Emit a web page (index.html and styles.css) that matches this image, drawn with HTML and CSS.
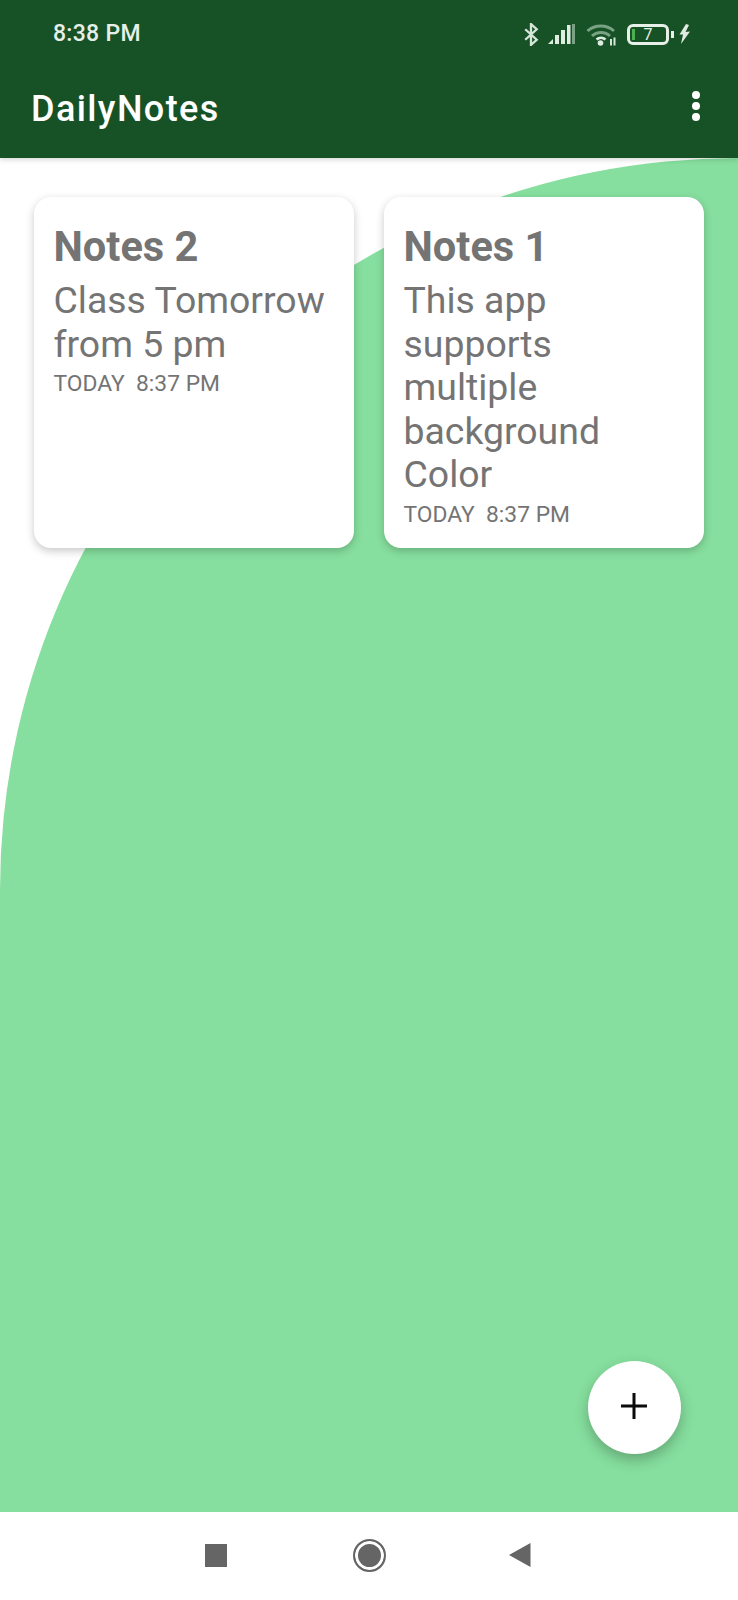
FILE: index.html
```html
<!DOCTYPE html>
<html lang="en">
<head>
    <meta charset="UTF-8">
    <meta name="viewport" content="width=device-width, initial-scale=1.0">
    <title>DailyNotes</title>
    <link rel="stylesheet" href="styles.css">
</head>
<body>
    <header class="app-header">
        <div class="status-bar">
            <span class="status-time">8:38 PM</span>
            <div class="status-icons">
                <svg class="icon-bt" width="15" height="23" viewBox="0 0 14 22">
                    <path d="M1 6 L12 16 L6.5 21 V1 L12 6 L1 16" fill="none" stroke="#d5e5d8" stroke-width="2.2"/>
                </svg>
                <svg class="icon-signal" width="27" height="20" viewBox="0 0 27 20">
                    <path d="M0 20 L5 15 V20 Z" fill="#e0ebe2"/>
                    <rect x="7" y="11" width="4" height="9" fill="#e0ebe2"/>
                    <rect x="13" y="6" width="4" height="14" fill="#e0ebe2"/>
                    <rect x="19" y="1" width="3.5" height="19" fill="#e0ebe2"/>
                    <rect x="24" y="0" width="3" height="20" fill="#79a183"/>
                </svg>
                <svg class="icon-wifi" width="31" height="23" viewBox="0 0 31 23">
                    <path d="M1.5 8 A20 20 0 0 1 28 8" fill="none" stroke="#79a183" stroke-width="3"/>
                    <path d="M6 13 A13 13 0 0 1 24 13" fill="none" stroke="#79a183" stroke-width="3"/>
                    <path d="M10.5 16.5 A7 7 0 0 1 19.5 16.5" fill="none" stroke="#e0ebe2" stroke-width="2.6"/>
                    <circle cx="14.5" cy="20" r="2.8" fill="#e0ebe2"/>
                    <rect x="24" y="16" width="2" height="6.5" fill="#d5e5d8"/>
                    <rect x="27.5" y="14.5" width="2" height="8" fill="#d5e5d8"/>
                </svg>
                <div class="battery">
                    <span class="battery-level"></span>
                    <span class="battery-num">7</span>
                </div>
                <span class="battery-nub"></span>
                <svg class="icon-bolt" width="11" height="20" viewBox="0 0 11 20">
                    <path d="M7 0 L0.5 10.5 L4 10.5 L2 20 L11 7.5 L6.5 8 L10 1 Z" fill="#e0ebe2"/>
                </svg>
            </div>
        </div>
        <div class="toolbar">
            <span class="app-title">DailyNotes</span>
            <div class="menu-dots">
                <span></span>
                <span></span>
                <span></span>
            </div>
        </div>
    </header>

    <main class="notes-area">
        <div class="note-card">
            <h2 class="note-title">Notes 2</h2>
            <p class="note-text">Class Tomorrow from 5 pm</p>
            <p class="note-date">TODAY&nbsp; 8:37 PM</p>
        </div>
        <div class="note-card">
            <h2 class="note-title">Notes 1</h2>
            <p class="note-text">This app supports multiple background Color</p>
            <p class="note-date">TODAY&nbsp; 8:37 PM</p>
        </div>
        <button class="fab">
            <svg width="28" height="28" viewBox="0 0 28 28">
                <path d="M14 1 V27 M1 14 H27" stroke="#0b0b0b" stroke-width="3"/>
            </svg>
        </button>
    </main>

    <nav class="nav-bar">
        <span class="nav-square"></span>
        <span class="nav-home"></span>
        <svg width="22" height="24" viewBox="0 0 22 24">
            <path d="M0 12 L21.5 0 V24 Z" fill="#656565"/>
        </svg>
    </nav>
</body>
</html>
```

FILE: styles.css
```css
* {
    box-sizing: border-box;
}
body {
    font-family: Roboto, sans-serif;
    background-color: white;
    margin: 0;
    width: 738px;
    height: 1600px;
    display: flex;
    flex-direction: column;
}

/* top bar */
.app-header {
    background: #175227;
    color: white;
    height: 158px;
    flex-shrink: 0;
    position: relative;
    z-index: 1;
    box-shadow: 0 2px 5px rgba(0,0,0,0.15);
}
.status-bar {
    height: 66px;
    padding: 0 48px 0 53px;
    display: flex;
    align-items: center;
    justify-content: space-between;
}
.status-time {
    font-size: 23px;
    font-weight: 500;
    letter-spacing: 0.3px;
    color: #e6efe8;
}
.status-icons {
    display: flex;
    align-items: center;
    margin-top: 2px;
}
.icon-bt {
    margin-right: 9px;
}
.icon-signal {
    margin-right: 11px;
}
.icon-wifi {
    margin-right: 10px;
}
.battery {
    width: 42px;
    height: 21px;
    border: 3px solid #e6efe8;
    border-radius: 6px;
    display: flex;
    align-items: center;
    justify-content: center;
    position: relative;
}
.battery-level {
    position: absolute;
    left: 2px;
    top: 2px;
    width: 3px;
    height: 11px;
    background: #4caf50;
}
.battery-num {
    font-size: 16px;
    color: #e6efe8;
}
.battery-nub {
    width: 3px;
    height: 7px;
    margin-left: 2px;
    margin-right: 5px;
    background: #e6efe8;
}
.toolbar {
    height: 86px;
    padding: 0 38px 0 31px;
    display: flex;
    align-items: center;
    justify-content: space-between;
}
.app-title {
    font-size: 36px;
    font-weight: 500;
    letter-spacing: 1.4px;
}
.menu-dots {
    display: flex;
    flex-direction: column;
    gap: 3px;
    padding-bottom: 6px;
}
.menu-dots span {
    width: 8px;
    height: 8px;
    border-radius: 50%;
    background: white;
}

/* notes */
.notes-area {
    flex: 1;
    position: relative;
    background: #86df9e;
    border-top-left-radius: 738px 732px;
    padding: 39px 34px;
    display: flex;
    align-items: flex-start;
    gap: 30px;
}
.note-card {
    width: 320px;
    height: 351px;
    background: white;
    border-radius: 17px;
    padding: 26px 19.5px;
    color: #747474;
    box-shadow: 0 3px 8px rgba(0,0,0,0.22);
}
.note-title {
    margin: 0;
    font-size: 41.6px;
    line-height: 48px;
    font-weight: 700;
}
.note-text {
    margin: 8px 0 0;
    font-size: 37.4px;
    line-height: 43.6px;
}
.note-date {
    margin: 3px 0 0;
    font-size: 22.8px;
    line-height: 30px;
}
.fab {
    position: absolute;
    right: 57px;
    bottom: 58px;
    width: 93px;
    height: 93px;
    border: none;
    border-radius: 50%;
    background: white;
    padding: 0 1px 3px 0;
    display: flex;
    align-items: center;
    justify-content: center;
    box-shadow: 0 6px 14px rgba(0,0,0,0.25);
}

/* system nav */
.nav-bar {
    height: 88px;
    flex-shrink: 0;
    background: white;
    padding: 0 0 2px 205px;
    display: flex;
    align-items: center;
}
.nav-square {
    width: 22px;
    height: 23px;
    background: #656565;
    margin-right: 126px;
}
.nav-home {
    width: 33px;
    height: 33px;
    border-radius: 50%;
    border: 2.5px solid #656565;
    background: #656565;
    box-shadow: inset 0 0 0 3px white;
    margin-right: 123px;
}
```
